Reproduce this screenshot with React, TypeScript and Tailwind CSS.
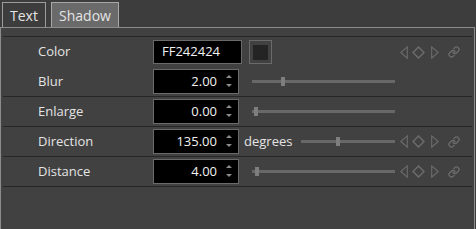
import { Link } from 'lucide-react';

interface Row {
  label: string;
  kind: 'color' | 'number';
  value: string;
  unit?: string;
  thumb?: number;
  keys: boolean;
  border: boolean;
}

const rows: Row[] = [
  { label: 'Color', kind: 'color', value: 'FF242424', keys: true, border: false },
  { label: 'Blur', kind: 'number', value: '2.00', thumb: 29, keys: false, border: true },
  { label: 'Enlarge', kind: 'number', value: '0.00', thumb: 2, keys: false, border: true },
  { label: 'Direction', kind: 'number', value: '135.00', unit: 'degrees', thumb: 35, keys: true, border: true },
  { label: 'Distance', kind: 'number', value: '4.00', thumb: 3, keys: true, border: true },
];

function Spinner() {
  return (
    <svg width="8" height="16" viewBox="0 0 8 16" className="absolute right-[5px] top-[3px]">
      <path d="M1 5 L4 2 L7 5 Z" fill="#8c8c8c" />
      <path d="M1 11 L4 14 L7 11 Z" fill="#8c8c8c" />
    </svg>
  );
}

function Slider({ thumb }: { thumb: number }) {
  return (
    <div className="relative flex-1 h-[3px] bg-[#686868]">
      <div
        className="absolute top-[-3px] w-[4px] h-[9px] bg-[#7e7e7e]"
        style={{ left: `${thumb}px` }}
      />
    </div>
  );
}

function KeyIcons() {
  return (
    <div className="flex items-center w-[77px] pl-[5px]">
      <svg width="8" height="13" viewBox="0 0 8 13">
        <path d="M7.3 0.8 L0.8 6.5 L7.3 12.2 Z" fill="none" stroke="#6c6c6c" strokeWidth="1.1" />
      </svg>
      <svg width="13" height="13" viewBox="0 0 13 13" className="ml-[4px]">
        <path d="M6.5 1 L12 6.5 L6.5 12 L1 6.5 Z" fill="none" stroke="#6c6c6c" strokeWidth="1.5" />
      </svg>
      <svg width="8" height="13" viewBox="0 0 8 13" className="ml-[6px]">
        <path d="M0.7 0.8 L7.2 6.5 L0.7 12.2 Z" fill="none" stroke="#6c6c6c" strokeWidth="1.1" />
      </svg>
      <Link size={12} strokeWidth={2.6} color="#6c6c6c" className="ml-[9px]" />
    </div>
  );
}

export default function App() {
  return (
    <div
      className="w-[476px] h-[229px] bg-[#3d3d3d] flex flex-col overflow-hidden text-[#e4e4e4]"
      style={{ fontFamily: '"Open Sans", "Noto Sans", sans-serif' }}
    >
      {/* Tabs */}
      <div className="flex items-end h-[27px] pl-[2px] gap-[5px]">
        <div className="w-[44px] h-[25px] border border-b-0 border-[#9c9c9c] flex items-center justify-center text-[14px]">
          Text
        </div>
        <div className="w-[68px] h-[25px] border border-b-0 border-[#a8a8a8] bg-[#6a6a6a] flex items-center justify-center text-[14px]">
          Shadow
        </div>
      </div>

      {/* Panel */}
      <div className="w-[475px] flex-1 bg-[#414141] border-t border-l border-r border-[#8c8c8c] px-[2px] pt-[8px]">
        <div className="border-t border-[#262626]">
          {rows.map((r) => (
            <div
              key={r.label}
              className={`flex items-center h-[30px] text-[13px] ${r.border ? 'border-b border-[#262626]' : ''}`}
            >
              <div className="w-[150px] pl-[35px]">{r.label}</div>
              {r.kind === 'color' ? (
                <>
                  <div className="w-[89px] h-[24px] bg-black border border-[#6a6a6a] flex items-center pl-[8px] text-[#f2f2f2]">
                    {r.value}
                  </div>
                  <div className="ml-[7px] w-[23px] h-[24px] border border-[#6a6a6a] flex items-center justify-center">
                    <div className="w-[15px] h-[15px] bg-[#242424]" />
                  </div>
                  <div className="w-[123px]" />
                </>
              ) : (
                <>
                  <div className="relative w-[86px] h-[25px] bg-black border border-[#6a6a6a] flex items-center justify-end pr-[21px] text-[#f2f2f2]">
                    {r.value}
                    <Spinner />
                  </div>
                  {r.unit ? (
                    <div className="ml-[5px] w-[57px]">{r.unit}</div>
                  ) : (
                    <div className="w-[13px]" />
                  )}
                  <Slider thumb={r.thumb ?? 0} />
                </>
              )}
              {r.keys ? <KeyIcons /> : <div className="w-[77px]" />}
            </div>
          ))}
        </div>
      </div>
    </div>
  );
}
